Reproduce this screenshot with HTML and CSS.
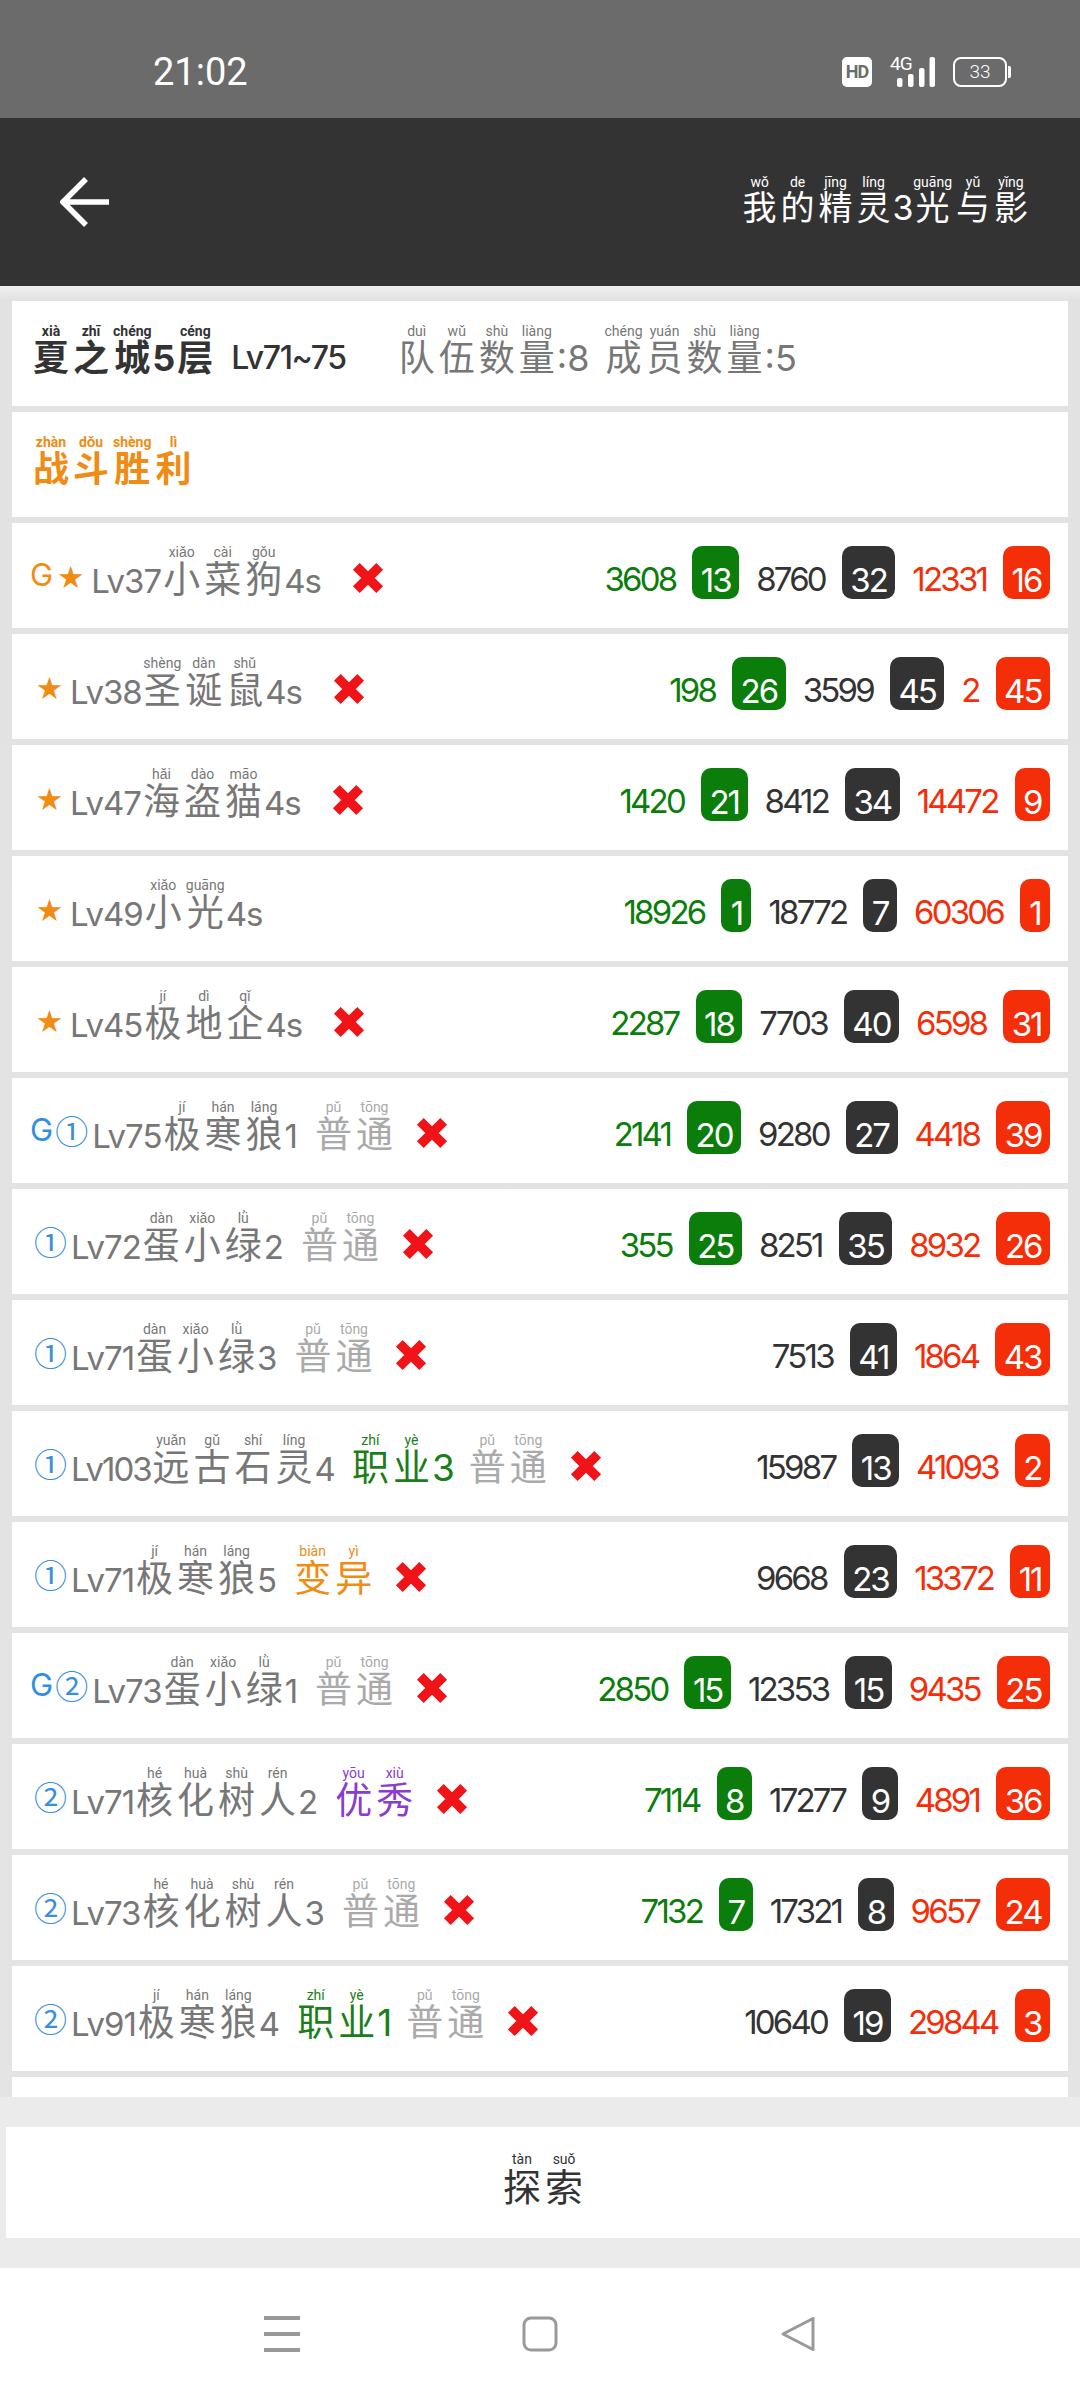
FILE: index.html
```html
<!DOCTYPE html>
<html lang="zh">
<head>
<meta charset="utf-8">
<title>探索</title>
<link rel="stylesheet" href="styles.css">
</head>
<body>
<div class="phone">
<div class="status">
  <span class="time">21:02</span>
  <span class="status-icons">
    <span class="hd">HD</span>
    <span class="net"><span class="net-label">4G</span>
      <svg class="bars" width="38" height="30" viewBox="0 0 38 30"><rect x="0" y="21" width="5.5" height="9" rx="2"/><rect x="11" y="17" width="5.5" height="13" rx="2"/><rect x="22" y="11" width="5.5" height="19" rx="2"/><rect x="32.5" y="0" width="5.5" height="30" rx="2"/></svg>
    </span>
    <span class="battery"><span class="battery-body">33</span><span class="battery-tip"></span></span>
  </span>
</div>
<header class="top">
  <svg class="back" width="50" height="50" viewBox="0 0 50 50"><path d="M49 25H5M26 2 3 25l23 23" fill="none" stroke="#fff" stroke-width="5.5"/></svg>
  <div class="top-title"><ruby>我<rt>wǒ</rt></ruby><ruby>的<rt>de</rt></ruby><ruby>精<rt>jīng</rt></ruby><ruby>灵<rt>líng</rt></ruby>3<ruby>光<rt>guāng</rt></ruby><ruby>与<rt>yǔ</rt></ruby><ruby>影<rt>yǐng</rt></ruby></div>
</header>
<main class="list">
  <div class="row row-info">
    <span class="stage"><ruby>夏<rt>xià</rt></ruby><ruby>之<rt>zhī</rt></ruby><ruby>城<rt>chéng</rt></ruby>5<ruby>层<rt>céng</rt></ruby></span>
    <span class="range">Lv71~75</span>
    <span class="meta"><ruby>队<rt>duì</rt></ruby><ruby>伍<rt>wǔ</rt></ruby><ruby>数<rt>shù</rt></ruby><ruby>量<rt>liàng</rt></ruby>:8</span>
    <span class="meta meta-b"><ruby>成<rt>chéng</rt></ruby><ruby>员<rt>yuán</rt></ruby><ruby>数<rt>shù</rt></ruby><ruby>量<rt>liàng</rt></ruby>:5</span>
  </div>
  <div class="row row-result"><span class="win"><ruby>战<rt>zhàn</rt></ruby><ruby>斗<rt>dǒu</rt></ruby><ruby>胜<rt>shèng</rt></ruby><ruby>利<rt>lì</rt></ruby></span></div>

  <div class="row g"><span class="lead"><i class="tag">G</i><i class="star">★</i></span><span class="name">Lv37<ruby>小<rt>xiǎo</rt></ruby><ruby>菜<rt>cài</rt></ruby><ruby>狗<rt>gǒu</rt></ruby>4s</span><svg class="x" viewBox="0 0 32 32"><path d="M5 5 27 27M27 5 5 27"/></svg>
    <div class="stats"><span class="n green">3608</span><span class="b bg-green">13</span><span class="n dark">8760</span><span class="b bg-dark">32</span><span class="n red">12331</span><span class="b bg-red">16</span></div></div>
  <div class="row s"><span class="lead"><i class="star">★</i></span><span class="name">Lv38<ruby>圣<rt>shèng</rt></ruby><ruby>诞<rt>dàn</rt></ruby><ruby>鼠<rt>shǔ</rt></ruby>4s</span><svg class="x" viewBox="0 0 32 32"><path d="M5 5 27 27M27 5 5 27"/></svg>
    <div class="stats"><span class="n green">198</span><span class="b bg-green">26</span><span class="n dark">3599</span><span class="b bg-dark">45</span><span class="n red">2</span><span class="b bg-red">45</span></div></div>
  <div class="row s"><span class="lead"><i class="star">★</i></span><span class="name">Lv47<ruby>海<rt>hǎi</rt></ruby><ruby>盗<rt>dào</rt></ruby><ruby>猫<rt>māo</rt></ruby>4s</span><svg class="x" viewBox="0 0 32 32"><path d="M5 5 27 27M27 5 5 27"/></svg>
    <div class="stats"><span class="n green">1420</span><span class="b bg-green">21</span><span class="n dark">8412</span><span class="b bg-dark">34</span><span class="n red">14472</span><span class="b bg-red">9</span></div></div>
  <div class="row s"><span class="lead"><i class="star">★</i></span><span class="name">Lv49<ruby>小<rt>xiǎo</rt></ruby><ruby>光<rt>guāng</rt></ruby>4s</span>
    <div class="stats"><span class="n green">18926</span><span class="b bg-green">1</span><span class="n dark">18772</span><span class="b bg-dark">7</span><span class="n red">60306</span><span class="b bg-red">1</span></div></div>
  <div class="row s"><span class="lead"><i class="star">★</i></span><span class="name">Lv45<ruby>极<rt>jí</rt></ruby><ruby>地<rt>dì</rt></ruby><ruby>企<rt>qǐ</rt></ruby>4s</span><svg class="x" viewBox="0 0 32 32"><path d="M5 5 27 27M27 5 5 27"/></svg>
    <div class="stats"><span class="n green">2287</span><span class="b bg-green">18</span><span class="n dark">7703</span><span class="b bg-dark">40</span><span class="n red">6598</span><span class="b bg-red">31</span></div></div>

  <div class="row g"><span class="lead"><i class="tag blue">G</i><i class="num">①</i></span><span class="name">Lv75<ruby>极<rt>jí</rt></ruby><ruby>寒<rt>hán</rt></ruby><ruby>狼<rt>láng</rt></ruby>1</span><span class="q plain"><ruby>普<rt>pǔ</rt></ruby><ruby>通<rt>tōng</rt></ruby></span><svg class="x" viewBox="0 0 32 32"><path d="M5 5 27 27M27 5 5 27"/></svg>
    <div class="stats"><span class="n green">2141</span><span class="b bg-green">20</span><span class="n dark">9280</span><span class="b bg-dark">27</span><span class="n red">4418</span><span class="b bg-red">39</span></div></div>
  <div class="row o"><span class="lead"><i class="num">①</i></span><span class="name">Lv72<ruby>蛋<rt>dàn</rt></ruby><ruby>小<rt>xiǎo</rt></ruby><ruby>绿<rt>lǜ</rt></ruby>2</span><span class="q plain"><ruby>普<rt>pǔ</rt></ruby><ruby>通<rt>tōng</rt></ruby></span><svg class="x" viewBox="0 0 32 32"><path d="M5 5 27 27M27 5 5 27"/></svg>
    <div class="stats"><span class="n green">355</span><span class="b bg-green">25</span><span class="n dark">8251</span><span class="b bg-dark">35</span><span class="n red">8932</span><span class="b bg-red">26</span></div></div>
  <div class="row o"><span class="lead"><i class="num">①</i></span><span class="name">Lv71<ruby>蛋<rt>dàn</rt></ruby><ruby>小<rt>xiǎo</rt></ruby><ruby>绿<rt>lǜ</rt></ruby>3</span><span class="q plain"><ruby>普<rt>pǔ</rt></ruby><ruby>通<rt>tōng</rt></ruby></span><svg class="x" viewBox="0 0 32 32"><path d="M5 5 27 27M27 5 5 27"/></svg>
    <div class="stats"><span class="n dark">7513</span><span class="b bg-dark">41</span><span class="n red">1864</span><span class="b bg-red">43</span></div></div>
  <div class="row o"><span class="lead"><i class="num">①</i></span><span class="name name-long">Lv103<ruby>远<rt>yuǎn</rt></ruby><ruby>古<rt>gǔ</rt></ruby><ruby>石<rt>shí</rt></ruby><ruby>灵<rt>líng</rt></ruby>4</span><span class="q job"><ruby>职<rt>zhí</rt></ruby><ruby>业<rt>yè</rt></ruby>3</span><span class="q plain"><ruby>普<rt>pǔ</rt></ruby><ruby>通<rt>tōng</rt></ruby></span><svg class="x" viewBox="0 0 32 32"><path d="M5 5 27 27M27 5 5 27"/></svg>
    <div class="stats"><span class="n dark">15987</span><span class="b bg-dark">13</span><span class="n red">41093</span><span class="b bg-red">2</span></div></div>
  <div class="row o"><span class="lead"><i class="num">①</i></span><span class="name">Lv71<ruby>极<rt>jí</rt></ruby><ruby>寒<rt>hán</rt></ruby><ruby>狼<rt>láng</rt></ruby>5</span><span class="q mutant"><ruby>变<rt>biàn</rt></ruby><ruby>异<rt>yì</rt></ruby></span><svg class="x" viewBox="0 0 32 32"><path d="M5 5 27 27M27 5 5 27"/></svg>
    <div class="stats"><span class="n dark">9668</span><span class="b bg-dark">23</span><span class="n red">13372</span><span class="b bg-red">11</span></div></div>

  <div class="row g"><span class="lead"><i class="tag blue">G</i><i class="num">②</i></span><span class="name">Lv73<ruby>蛋<rt>dàn</rt></ruby><ruby>小<rt>xiǎo</rt></ruby><ruby>绿<rt>lǜ</rt></ruby>1</span><span class="q plain"><ruby>普<rt>pǔ</rt></ruby><ruby>通<rt>tōng</rt></ruby></span><svg class="x" viewBox="0 0 32 32"><path d="M5 5 27 27M27 5 5 27"/></svg>
    <div class="stats"><span class="n green">2850</span><span class="b bg-green">15</span><span class="n dark">12353</span><span class="b bg-dark">15</span><span class="n red">9435</span><span class="b bg-red">25</span></div></div>
  <div class="row o"><span class="lead"><i class="num">②</i></span><span class="name">Lv71<ruby>核<rt>hé</rt></ruby><ruby>化<rt>huà</rt></ruby><ruby>树<rt>shù</rt></ruby><ruby>人<rt>rén</rt></ruby>2</span><span class="q good"><ruby>优<rt>yōu</rt></ruby><ruby>秀<rt>xiù</rt></ruby></span><svg class="x" viewBox="0 0 32 32"><path d="M5 5 27 27M27 5 5 27"/></svg>
    <div class="stats"><span class="n green">7114</span><span class="b bg-green">8</span><span class="n dark">17277</span><span class="b bg-dark">9</span><span class="n red">4891</span><span class="b bg-red">36</span></div></div>
  <div class="row o"><span class="lead"><i class="num">②</i></span><span class="name">Lv73<ruby>核<rt>hé</rt></ruby><ruby>化<rt>huà</rt></ruby><ruby>树<rt>shù</rt></ruby><ruby>人<rt>rén</rt></ruby>3</span><span class="q plain"><ruby>普<rt>pǔ</rt></ruby><ruby>通<rt>tōng</rt></ruby></span><svg class="x" viewBox="0 0 32 32"><path d="M5 5 27 27M27 5 5 27"/></svg>
    <div class="stats"><span class="n green">7132</span><span class="b bg-green">7</span><span class="n dark">17321</span><span class="b bg-dark">8</span><span class="n red">9657</span><span class="b bg-red">24</span></div></div>
  <div class="row o"><span class="lead"><i class="num">②</i></span><span class="name">Lv91<ruby>极<rt>jí</rt></ruby><ruby>寒<rt>hán</rt></ruby><ruby>狼<rt>láng</rt></ruby>4</span><span class="q job"><ruby>职<rt>zhí</rt></ruby><ruby>业<rt>yè</rt></ruby>1</span><span class="q plain"><ruby>普<rt>pǔ</rt></ruby><ruby>通<rt>tōng</rt></ruby></span><svg class="x" viewBox="0 0 32 32"><path d="M5 5 27 27M27 5 5 27"/></svg>
    <div class="stats"><span class="n dark">10640</span><span class="b bg-dark">19</span><span class="n red">29844</span><span class="b bg-red">3</span></div></div>
  <div class="row"></div>
</main>
<div class="action"><button class="explore"><ruby>探<rt>tàn</rt></ruby><ruby>索<rt>suǒ</rt></ruby></button></div>
<nav class="nav">
  <svg width="36" height="36" viewBox="0 0 36 36"><path d="M0 2H36M0 18H36M0 34H36" stroke="#999" stroke-width="4"/></svg>
  <svg width="36" height="36" viewBox="0 0 36 36"><rect x="2" y="2" width="32" height="32" rx="7" fill="none" stroke="#999" stroke-width="3"/></svg>
  <svg width="36" height="36" viewBox="0 0 36 36"><path d="M33 2.5V33.5L3 18Z" fill="none" stroke="#999" stroke-width="3" stroke-linejoin="round"/></svg>
</nav>
</div>
</body>
</html>
```
FILE: styles.css
```css
* { box-sizing: border-box; }
html, body { margin: 0; padding: 0; }
body { font-family: Inter, "Noto Sans CJK SC", sans-serif; background: #e4e4e4; }
.phone { width: 1080px; height: 2400px; display: flex; flex-direction: column; overflow: hidden; }

.status { height: 118px; background: #6b6b6b; color: #fff; display: flex; align-items: center; padding: 26px 69px 0 153px; justify-content: space-between; }
.time { font: 400 38px Roboto, sans-serif; }
.status-icons { display: flex; align-items: center; gap: 18px; }
.hd { width: 30px; height: 30px; border-radius: 5px; background: #fff; color: #6b6b6b; font: 700 18px/30px Roboto, sans-serif; text-align: center; letter-spacing: -1px; }
.net { position: relative; display: block; width: 45px; height: 30px; }
.net-label { position: absolute; left: 0; top: -2px; font: 400 19px/18px Roboto, sans-serif; letter-spacing: -1px; }
.bars { position: absolute; right: 0; top: 0; fill: #fff; }
.battery { display: flex; align-items: center; }
.battery-body { width: 54px; height: 30px; border: 2.5px solid #fff; border-radius: 8px; font: 300 19px/25px Roboto, sans-serif; text-align: center; }
.battery-tip { width: 3px; height: 12px; background: #fff; border-radius: 0 2px 2px 0; margin-left: 1px; }

.top { height: 168px; flex: none; background: #333; display: flex; align-items: center; justify-content: space-between; padding: 0 50px 0 60px; }
.top-title { color: #fff; font-size: 34px; line-height: 1.2; }
.top-title rt { color: #fff; }

ruby { ruby-position: over; padding: 0 2px; }
rt { font-family: Roboto, sans-serif; font-size: 14px; line-height: 12px; letter-spacing: 0; font-weight: inherit; transform: translateY(15px) scaleY(1.3); }

.list { height: 1811px; flex: none; overflow: hidden; padding: 15px 12px 0; display: flex; flex-direction: column; gap: 6px; background: linear-gradient(#f0f0f0 0, #e2e2e2 14px, #e4e4e4 100%); }
.row { height: 105px; flex: none; background: #fff; display: flex; align-items: center; padding-right: 18px; padding-bottom: 2px; }
.row.g { padding-left: 18px; }
.row.s { padding-left: 25px; }
.row.o { padding-left: 22px; }

.row-info { padding-left: 19px; }
.stage { color: #333; font-size: 36px; font-weight: 700; }
.range { color: #333; font-size: 32px; font-weight: 500; margin-left: 16px; letter-spacing: -1.4px; padding-top: 10px; }
.meta { color: #777; font-size: 36px; margin-left: 51px; }
.meta-b { margin-left: 13px; }
.row-result { padding-left: 19px; }
.win { color: #f08c14; font-size: 36px; font-weight: 700; }

.lead { display: flex; align-items: center; }
.lead i { font-style: normal; }
.tag { color: #f08c14; font-size: 31px; margin-right: 5px; }
.tag.blue { color: #2f8fe0; margin-right: 2px; }
.star { color: #f08c14; font: 25px "Noto Sans CJK SC", sans-serif; margin-right: 6px; }
.num { color: #3a8fdc; font: 33px "Noto Sans CJK SC", sans-serif; margin-right: 2px; }
.name { color: #777; font-size: 33px; letter-spacing: -1px; margin-left: 2px; }
.name-long { letter-spacing: -2px; }
.name ruby { font-size: 37px; letter-spacing: 0; }
.name rt { color: #777; }
.q { font-size: 37px; margin-left: 16px; }
.job + .q { margin-left: 12px; }
.plain { color: #aaa; }
.job { color: #1a7f1a; }
.mutant { color: #f08c14; }
.good { color: #8a3ccf; }
.x { width: 34px; height: 34px; flex: none; margin: 6px 0 0 20px; fill: none; stroke: #f01418; stroke-width: 9; }
.name + .x { margin-left: 30px; }

.stats { margin-left: auto; display: flex; align-items: center; margin-top: -5px; }
.n { font-size: 33px; letter-spacing: -2.8px; margin-right: 17px; padding-top: 13px; }
.b { height: 53px; min-width: 30px; padding: 16px 8.5px 0; border-radius: 10px; color: #fff; font-size: 33px; letter-spacing: -2px; line-height: 37px; text-align: center; margin-right: 17px; }
.b:last-child { margin-right: 0; }
.green { color: #0a7d0a; }
.dark { color: #333; }
.red { color: #f52e0a; }
.bg-green { background: #0a7d0a; }
.bg-dark { background: #333; }
.bg-red { background: #f52e0a; }

.action { height: 171px; flex: none; background: #ebebeb; padding: 30px 0 30px 6px; }
.explore { width: 100%; height: 111px; border: 0; background: #fff; color: #333; font: 38px "Noto Sans CJK SC", sans-serif; display: block; padding: 0; }
.nav { flex: 1; background: #fff; display: flex; align-items: center; justify-content: center; gap: 222px; }
```
